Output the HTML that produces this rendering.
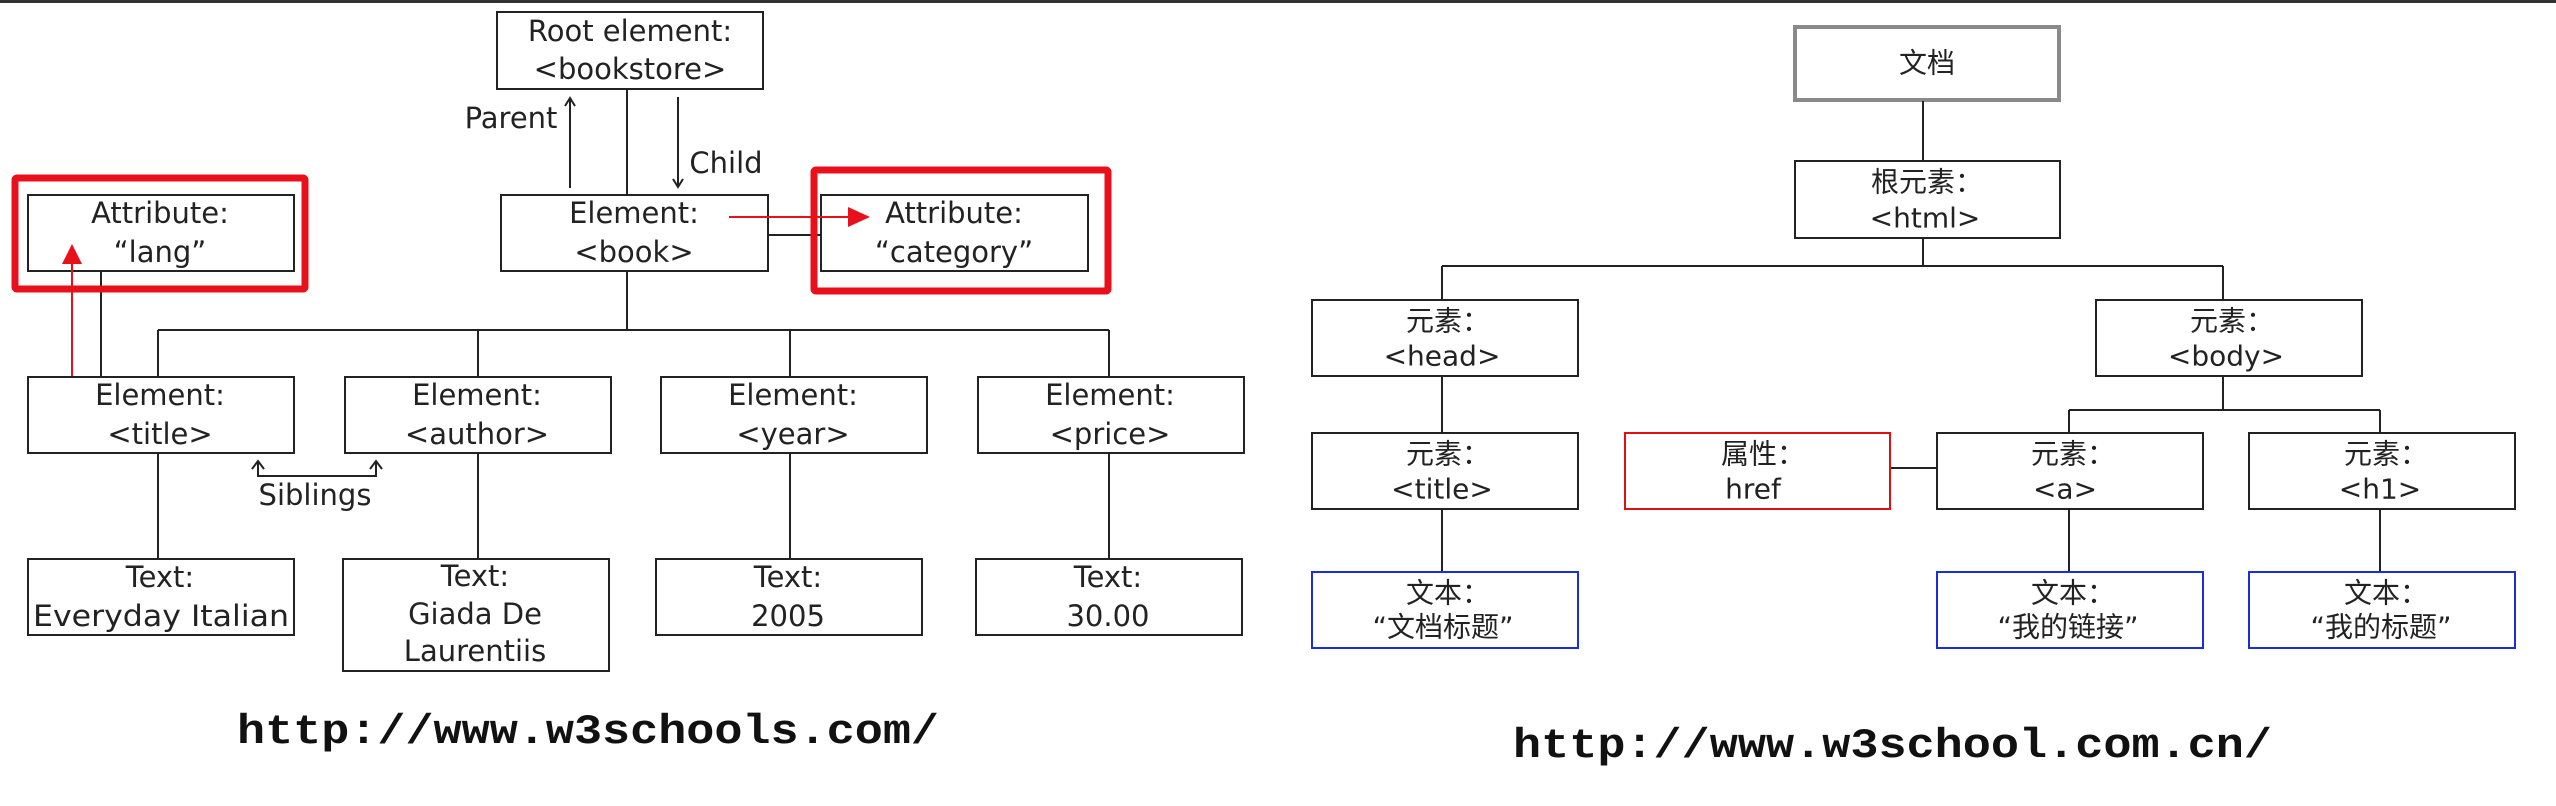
<!DOCTYPE html>
<html><head><meta charset="utf-8"><style>
html,body{margin:0;padding:0;background:#fff;width:2556px;height:806px;overflow:hidden}
svg{display:block}
text{font-family:"DejaVu Sans","Noto Sans CJK SC",sans-serif;font-size:29px;fill:#222;text-anchor:middle;dominant-baseline:central}
.cn{font-family:"DejaVu Sans","Noto Sans CJK SC",sans-serif;font-size:28px}
.url{font-family:"Liberation Mono",monospace;font-weight:bold;font-size:42px;text-anchor:start;dominant-baseline:alphabetic;fill:#111}
</style></head><body>
<svg width="2556" height="806" viewBox="0 0 2556 806" xmlns="http://www.w3.org/2000/svg">
<rect x="0" y="0" width="2556" height="3" fill="#333"/>
<g fill="none" stroke="#222" stroke-width="2">
<rect x="497" y="12" width="266" height="77"/>
<rect x="501" y="195" width="267" height="76"/>
<rect x="28" y="195" width="266" height="76"/>
<rect x="821" y="195" width="267" height="76"/>
<rect x="28" y="377" width="266" height="76"/>
<rect x="345" y="377" width="266" height="76"/>
<rect x="661" y="377" width="266" height="76"/>
<rect x="978" y="377" width="266" height="76"/>
<rect x="28" y="559" width="266" height="76"/>
<rect x="343" y="559" width="266" height="112"/>
<rect x="656" y="559" width="266" height="76"/>
<rect x="976" y="559" width="266" height="76"/>
<line x1="627" y1="89" x2="627" y2="195"/>
<line x1="627" y1="271" x2="627" y2="330"/>
<line x1="158" y1="330" x2="1109" y2="330"/>
<line x1="158" y1="330" x2="158" y2="377"/>
<line x1="478" y1="330" x2="478" y2="377"/>
<line x1="790" y1="330" x2="790" y2="377"/>
<line x1="1109" y1="330" x2="1109" y2="377"/>
<line x1="158" y1="453" x2="158" y2="559"/>
<line x1="478" y1="453" x2="478" y2="559"/>
<line x1="790" y1="453" x2="790" y2="559"/>
<line x1="1109" y1="453" x2="1109" y2="559"/>
<line x1="101" y1="271" x2="101" y2="377"/>
<line x1="768" y1="235" x2="821" y2="235"/>
<line x1="570" y1="188" x2="570" y2="98"/>
<polyline points="565,106 570,98 575,106"/>
<line x1="678" y1="97" x2="678" y2="186"/>
<polyline points="673,179 678,187 683,179"/>
<polyline points="258,461 258,476 376,476 376,461"/>
<polyline points="252,469 258,461 264,469"/>
<polyline points="370,469 376,461 382,469"/>
</g>
<g fill="none" stroke="#e8101a">
<rect x="15" y="178" width="290" height="111" stroke-width="7" rx="2"/>
<rect x="814" y="170" width="294" height="121" stroke-width="7" rx="2"/>
<line x1="729" y1="217" x2="850" y2="217" stroke-width="2"/>
<line x1="72" y1="376" x2="72" y2="262" stroke-width="2"/>
</g>
<polygon points="848,207 870,217 848,227" fill="#e8101a"/>
<polygon points="62,264 72,244 82,264" fill="#e8101a"/>
<text x="630" y="31">Root element:</text>
<text x="630" y="69">&lt;bookstore&gt;</text>
<text x="634" y="213">Element:</text>
<text x="634" y="252">&lt;book&gt;</text>
<text x="160" y="213">Attribute:</text>
<text x="160" y="252">“lang”</text>
<text x="954" y="213">Attribute:</text>
<text x="954" y="252">“category”</text>
<text x="160" y="395">Element:</text><text x="160" y="434">&lt;title&gt;</text>
<text x="477" y="395">Element:</text><text x="477" y="434">&lt;author&gt;</text>
<text x="793" y="395">Element:</text><text x="793" y="434">&lt;year&gt;</text>
<text x="1110" y="395">Element:</text><text x="1110" y="434">&lt;price&gt;</text>
<text x="160" y="577">Text:</text><text x="161" y="616" textLength="256" lengthAdjust="spacingAndGlyphs">Everyday Italian</text>
<text x="475" y="576">Text:</text><text x="475" y="614">Giada De</text><text x="475" y="651">Laurentiis</text>
<text x="788" y="577">Text:</text><text x="788" y="616">2005</text>
<text x="1108" y="577">Text:</text><text x="1108" y="616">30.00</text>
<text x="511" y="118">Parent</text>
<text x="726" y="163">Child</text>
<text x="315" y="495">Siblings</text>
<text class="url" x="237" y="743" textLength="702" lengthAdjust="spacingAndGlyphs">http://www.w3schools.com/</text>

<rect x="1795" y="27" width="264" height="73" fill="none" stroke="#8a8a8a" stroke-width="4"/>
<g fill="none" stroke="#222" stroke-width="2">
<rect x="1795" y="161" width="265" height="77"/>
<rect x="1312" y="300" width="266" height="76"/>
<rect x="2096" y="300" width="266" height="76"/>
<rect x="1312" y="433" width="266" height="76"/>
<rect x="1937" y="433" width="266" height="76"/>
<rect x="2249" y="433" width="266" height="76"/>
<line x1="1923" y1="101" x2="1923" y2="161"/>
<line x1="1923" y1="238" x2="1923" y2="266"/>
<line x1="1442" y1="266" x2="2223" y2="266"/>
<line x1="1442" y1="266" x2="1442" y2="300"/>
<line x1="2223" y1="266" x2="2223" y2="300"/>
<line x1="1442" y1="376" x2="1442" y2="433"/>
<line x1="2223" y1="376" x2="2223" y2="410"/>
<line x1="2069" y1="410" x2="2380" y2="410"/>
<line x1="2069" y1="410" x2="2069" y2="433"/>
<line x1="2380" y1="410" x2="2380" y2="433"/>
<line x1="1890" y1="468" x2="1937" y2="468"/>
<line x1="1442" y1="509" x2="1442" y2="571"/>
<line x1="2069" y1="509" x2="2069" y2="571"/>
<line x1="2380" y1="509" x2="2380" y2="571"/>
</g>
<rect x="1625" y="433" width="265" height="76" fill="none" stroke="#e01010" stroke-width="2"/>
<g fill="none" stroke="#1a2ee0" stroke-width="2">
<rect x="1312" y="572" width="266" height="76"/>
<rect x="1937" y="572" width="266" height="76"/>
<rect x="2249" y="572" width="266" height="76"/>
</g>
<text class="cn" x="1927" y="63">文档</text>
<text class="cn" x="1927" y="182">根元素：</text><text class="cn" x="1925" y="218">&lt;html&gt;</text>
<text class="cn" x="1448" y="321">元素：</text><text class="cn" x="1442" y="356">&lt;head&gt;</text>
<text class="cn" x="2232" y="321">元素：</text><text class="cn" x="2226" y="356">&lt;body&gt;</text>
<text class="cn" x="1448" y="454">元素：</text><text class="cn" x="1442" y="489">&lt;title&gt;</text>
<text class="cn" x="1763" y="454">属性：</text><text class="cn" x="1753" y="489">href</text>
<text class="cn" x="2073" y="454">元素：</text><text class="cn" x="2065" y="489">&lt;a&gt;</text>
<text class="cn" x="2386" y="454">元素：</text><text class="cn" x="2380" y="489">&lt;h1&gt;</text>
<text class="cn" x="1448" y="593">文本：</text><text class="cn" x="1443" y="627">“文档标题”</text>
<text class="cn" x="2073" y="593">文本：</text><text class="cn" x="2068" y="627">“我的链接”</text>
<text class="cn" x="2386" y="593">文本：</text><text class="cn" x="2381" y="627">“我的标题”</text>
<text class="url" x="1513" y="757" textLength="759" lengthAdjust="spacingAndGlyphs">http://www.w3school.com.cn/</text>
</svg>
</body></html>
